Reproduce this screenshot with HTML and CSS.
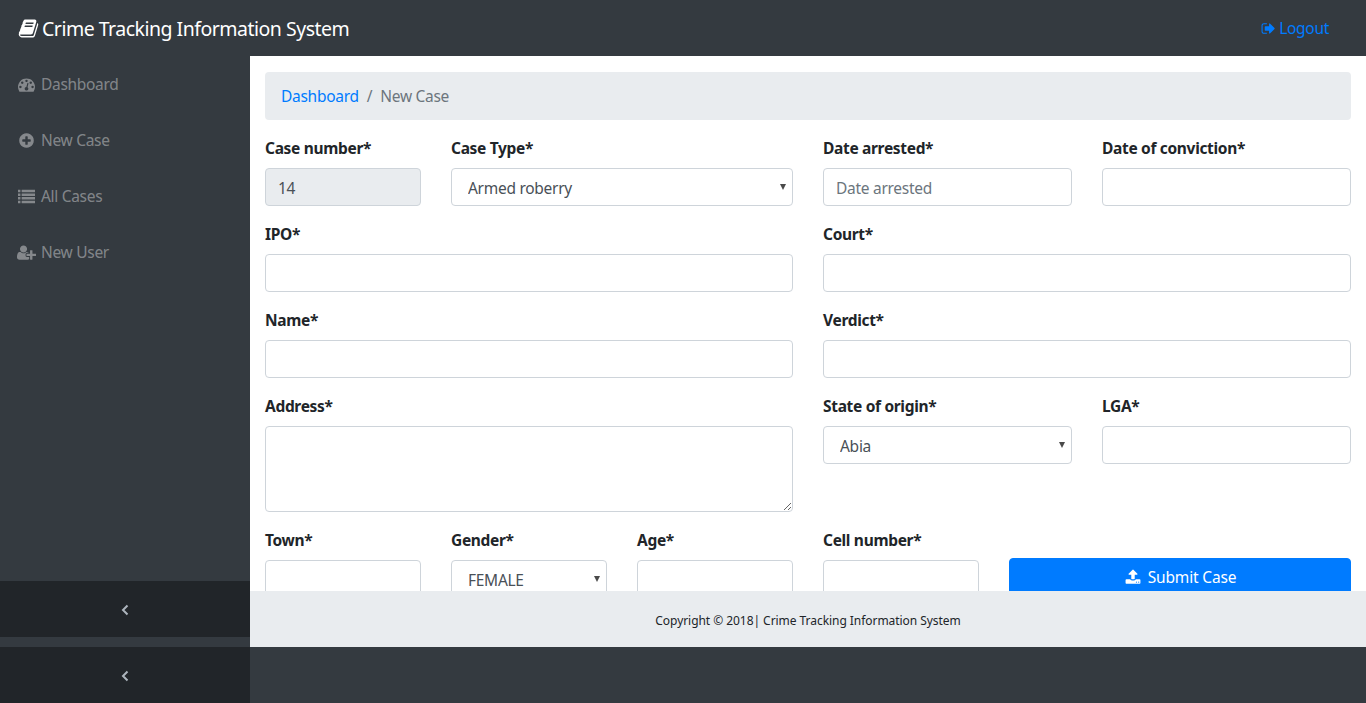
FILE: index.html
```html
<!DOCTYPE html>
<html>
<head>
<meta charset="utf-8">
<title>New Case</title>
<link rel="stylesheet" href="styles.css">
</head>
<body>
<nav class="topbar">
	<a class="brand" href="#">
		<svg class="ico" viewBox="0 0 1792 1792"><path d="M1703 478q40 57 18 129l-275 906q-19 64-76.5 107.5t-122.5 43.5h-923q-77 0-148.5-53.5t-99.5-131.5q-24-67-2-127 0-4 3-27t4-37q1-8-3-21.5t-3-19.5q2-11 8-21t16.5-23.5 16.5-23.5q23-38 45-91.5t30-91.5q3-10 .5-30t-.5-28q3-11 17-28t17-23q21-36 42-92t25-90q1-9-2.5-32t.5-28q4-13 22-30.5t22-22.5q19-26 42.5-84.5t27.5-96.5q1-8-3-25.5t-2-26.5q2-8 9-18t18-23 17-21q8-12 16.5-30.5t15-35 16-36 19.5-32 26.5-23.5 36-11.5 47.5 5.5l-1 3q38-9 51-9h761q74 0 114 56t18 130l-274 906q-36 119-71.5 153.5t-128.5 34.5h-869q-27 0-38 15-11 16-1 43 24 70 144 70h923q29 0 56-15.5t35-41.5l300-987q7-22 5-57 38 15 59 43zm-1064 2q-4 13 2 22.5t20 9.5h608q13 0 25.5-9.5t16.5-22.5l21-64q4-13-2-22.5t-20-9.5h-608q-13 0-25.5 9.5t-16.5 22.5zm-83 256q-4 13 2 22.5t20 9.5h608q13 0 25.5-9.5t16.5-22.5l21-64q4-13-2-22.5t-20-9.5h-608q-13 0-25.5 9.5t-16.5 22.5z"/></svg>
		<span class="brand-text">Crime Tracking Information System</span>
	</a>
	<a class="logout" href="#">
		<svg class="ico" viewBox="0 0 1792 1792"><path d="M704 1440q0 4 1 20t.5 26.5-3 23.5-10 19.5-20.5 6.5h-320q-119 0-203.5-84.5t-84.5-203.5v-704q0-119 84.5-203.5t203.5-84.5h320q13 0 22.5 9.5t9.5 22.5q0 4 1 20t.5 26.5-3 23.5-10 19.5-20.5 6.5h-320q-66 0-113 47t-47 113v704q0 66 47 113t113 47h312l11.5 1 11.5 3 8 5.5 7 9 2 13.5zm928-544q0 26-19 45l-544 544q-19 19-45 19t-45-19-19-45v-288h-448q-26 0-45-19t-19-45v-384q0-26 19-45t45-19h448v-288q0-26 19-45t45-19 45 19l544 544q19 19 19 45z"/></svg>
		Logout
	</a>
</nav>

<div class="wrapper">
	<div class="sidebar">
		<ul class="side-menu">
			<li><a href="#">
				<svg class="ico" viewBox="0 0 1792 1792"><path d="M384 1152q0-53-37.5-90.5t-90.5-37.5-90.5 37.5-37.5 90.5 37.5 90.5 90.5 37.5 90.5-37.5 37.5-90.5zm192-448q0-53-37.5-90.5t-90.5-37.5-90.5 37.5-37.5 90.5 37.5 90.5 90.5 37.5 90.5-37.5 37.5-90.5zm428 481l101-382q6-26-7.5-48.5t-38.5-29.5-48 6.5-30 39.5l-101 382q-60 5-107 43.5t-63 98.5q-20 77 20 146t117 89 146-20 89-117q16-60-6-117t-72-91zm660-33q0-53-37.5-90.5t-90.5-37.5-90.5 37.5-37.5 90.5 37.5 90.5 90.5 37.5 90.5-37.5 37.5-90.5zm-640-640q0-53-37.5-90.5t-90.5-37.5-90.5 37.5-37.5 90.5 37.5 90.5 90.5 37.5 90.5-37.5 37.5-90.5zm448 192q0-53-37.5-90.5t-90.5-37.5-90.5 37.5-37.5 90.5 37.5 90.5 90.5 37.5 90.5-37.5 37.5-90.5zm320 448q0 261-141 483-19 29-54 29h-1402q-35 0-54-29-141-221-141-483 0-182 71-348t191-286 286-191 348-71 348 71 286 191 191 286 71 348z"/></svg>
				Dashboard</a></li>
			<li><a href="#">
				<svg class="ico" viewBox="0 0 1792 1792"><path d="M1344 960v-128q0-26-19-45t-45-19h-256v-256q0-26-19-45t-45-19h-128q-26 0-45 19t-19 45v256h-256q-26 0-45 19t-19 45v128q0 26 19 45t45 19h256v256q0 26 19 45t45 19h128q26 0 45-19t19-45v-256h256q26 0 45-19t19-45zm320-64q0 209-103 385.5t-279.5 279.5-385.5 103-385.5-103-279.5-279.5-103-385.5 103-385.5 279.5-279.5 385.5-103 385.5 103 279.5 279.5 103 385.5z"/></svg>
				New Case</a></li>
			<li><a href="#">
				<svg class="ico" viewBox="0 0 1792 1792"><path d="M0 192h256v256H0zM384 192h1408v256H384zM0 576h256v256H0zM384 576h1408v256H384zM0 960h256v256H0zM384 960h1408v256H384zM0 1344h256v256H0zM384 1344h1408v256H384z"/></svg>
				All Cases</a></li>
			<li><a href="#">
				<svg class="ico ico-wide" viewBox="0 0 2048 1792"><path d="M704 896q-159 0-271.5-112.5t-112.5-271.5 112.5-271.5 271.5-112.5 271.5 112.5 112.5 271.5-112.5 271.5-271.5 112.5zm960 128h352q13 0 22.5 9.5t9.5 22.5v192q0 13-9.5 22.5t-22.5 9.5h-352v352q0 13-9.5 22.5t-22.5 9.5h-192q-13 0-22.5-9.5t-9.5-22.5v-352h-352q-13 0-22.5-9.5t-9.5-22.5v-192q0-13 9.5-22.5t22.5-9.5h352v-352q0-13 9.5-22.5t22.5-9.5h192q13 0 22.5 9.5t9.5 22.5v352zm-736 224q0 52 38 90t90 38h256v238q-68 50-171 50h-874q-121 0-194-69t-73-190q0-53 3.5-103.5t14-109 26.5-108.5 43-97.5 62-81 85.5-53.5 111.5-20q19 0 39 17 79 61 154.5 91.5t164.5 30.5 164.5-30.5 154.5-91.5q20-17 39-17 132 0 217 96h-223q-52 0-90 38t-38 90v192z"/></svg>
				New User</a></li>
		</ul>
		<a class="toggler" href="#"><svg class="angle" viewBox="0 0 8 12"><path d="M6.5 1.5 2 6l4.5 4.5"/></svg></a>
		<a class="toggler toggler-last" href="#"><svg class="angle" viewBox="0 0 8 12"><path d="M6.5 1.5 2 6l4.5 4.5"/></svg></a>
	</div>

	<div class="main">
		<div class="content">
			<ol class="breadcrumb">
				<li><a href="#">Dashboard</a></li>
				<li class="sep">/</li>
				<li class="current">New Case</li>
			</ol>
			<form class="case-form">
				<div class="group s2">
					<label>Case number*</label>
					<input class="control" type="text" value="14" readonly>
				</div>
				<div class="group s4">
					<label>Case Type*</label>
					<div class="select-box">
						<select class="control"><option>Armed roberry</option></select>
					</div>
				</div>
				<div class="group s3">
					<label>Date arrested*</label>
					<input class="control" type="text" placeholder="Date arrested">
				</div>
				<div class="group s3">
					<label>Date of conviction*</label>
					<input class="control" type="text">
				</div>

				<div class="group s6">
					<label>IPO*</label>
					<input class="control" type="text">
				</div>
				<div class="group s6">
					<label>Court*</label>
					<input class="control" type="text">
				</div>

				<div class="group s6">
					<label>Name*</label>
					<input class="control" type="text">
				</div>
				<div class="group s6">
					<label>Verdict*</label>
					<input class="control" type="text">
				</div>

				<div class="group s6">
					<label>Address*</label>
					<textarea class="control area"></textarea>
				</div>
				<div class="group s3">
					<label>State of origin*</label>
					<div class="select-box">
						<select class="control"><option>Abia</option></select>
					</div>
				</div>
				<div class="group s3">
					<label>LGA*</label>
					<input class="control" type="text">
				</div>

				<div class="group s2">
					<label>Town*</label>
					<input class="control" type="text">
				</div>
				<div class="group s2">
					<label>Gender*</label>
					<div class="select-box">
						<select class="control"><option>FEMALE</option></select>
					</div>
				</div>
				<div class="group s2">
					<label>Age*</label>
					<input class="control" type="text">
				</div>
				<div class="group s2">
					<label>Cell number*</label>
					<input class="control" type="text">
				</div>
				<div class="group s4">
					<button class="submit" type="button">
						<svg class="ico" viewBox="0 0 1792 1792"><path d="M1344 1472q0-26-19-45t-45-19-45 19-19 45 19 45 45 19 45-19 19-45zm256 0q0-26-19-45t-45-19-45 19-19 45 19 45 45 19 45-19 19-45zm128-224v320q0 40-28 68t-68 28h-1472q-40 0-68-28t-28-68v-320q0-40 28-68t68-28h427q21 56 70.5 92t110.5 36h256q61 0 110.5-36t70.5-92h427q40 0 68 28t28 68zm-325-648q-17 40-59 40h-256v448q0 26-19 45t-45 19h-256q-26 0-45-19t-19-45v-448h-256q-42 0-59-40-17-39 14-69l448-448q18-19 45-19t45 19l448 448q31 30 14 69z"/></svg>
						Submit Case
					</button>
				</div>
			</form>
		</div>
		<footer class="footer">Copyright © 2018| Crime Tracking Information System</footer>
	</div>
</div>
</body>
</html>
```

FILE: styles.css
```css
*{box-sizing:border-box;}
html,body{height:100%;}
body{margin:0; height:703px; overflow:hidden; background:#343a40; color:#212529; font-family:"Noto Sans","Open Sans","Liberation Sans",sans-serif; font-size:16px; line-height:24px;}
a{text-decoration:none;}
ul,ol{margin:0; padding:0; list-style:none;}
.ico{width:16px; height:16px; fill:currentColor; flex:none;}

.topbar{display:flex; align-items:center; justify-content:space-between; height:56px; padding:0 37px 0 18px;}
.brand{display:flex; align-items:center; gap:3px; color:#fff; font-size:19.5px; letter-spacing:-.5px;}
.brand .ico{width:21px; height:21px;}
.brand-text{padding-top:2px;}
.logout{display:flex; align-items:center; gap:3px; color:#007bff; font-size:15.5px; letter-spacing:-.3px;}
.logout .ico{width:15px; height:15px;}

.wrapper{display:flex; height:647px;}
.sidebar{display:flex; flex-direction:column; width:250px; flex:none;}
.side-menu{flex:1;}
.side-menu a{display:flex; align-items:center; gap:6px; height:56px; padding:0 18px; color:rgba(255,255,255,.4); font-size:15.5px; letter-spacing:-.3px;}
.side-menu .ico{width:17px; height:17px;}
.side-menu .ico-wide{width:19px; margin:0 -1px;}
.toggler{display:flex; align-items:center; justify-content:center; height:56px; padding-top:2px; background:#212529;}
.toggler-last{margin-top:10px;}
.angle{width:8px; height:12px; fill:none; stroke:#adb5bd; stroke-width:2;}

.main{display:flex; flex-direction:column; flex:1; height:591px;}
.content{height:535px; overflow:hidden; padding:16px 15px 0; background:#fff;}
.breadcrumb{display:flex; gap:8px; height:48px; align-items:center; margin-bottom:16px; padding:0 16px; background:#e9ecef; border-radius:4px; font-size:15.5px; letter-spacing:-.28px;}
.breadcrumb a{color:#007bff;}
.sep,.current{color:#6c757d;}

.case-form{display:grid; grid-template-columns:repeat(12,63px); column-gap:30px; row-gap:16px;}
.s2{grid-column:span 2;}
.s3{grid-column:span 3;}
.s4{grid-column:span 4;}
.s6{grid-column:span 6;}
.group label{display:block; margin-bottom:8px; font-weight:700; font-size:15.5px; letter-spacing:-.32px;}
.control{display:block; width:100%; height:38px; padding:2px 12px 0; border:1px solid #ced4da; border-radius:4px; background:#fff; color:#495057; font:15.5px/24px "Noto Sans","Open Sans","Liberation Sans",sans-serif; letter-spacing:-.28px; outline:none;}
.control[readonly]{background:#e9ecef;}
.control::placeholder{color:#6c757d; opacity:1;}
.area{height:86px; padding-top:6px; resize:vertical;}
.select-box{position:relative;}
.select-box select{appearance:none; -webkit-appearance:none; padding-left:16px;}
.select-box:after{content:''; position:absolute; top:16px; right:7px; border-left:3.5px solid transparent; border-right:3.5px solid transparent; border-top:6px solid #4a4a4a;}
.submit{display:flex; align-items:center; justify-content:center; gap:7px; width:100%; height:38px; margin-top:30px; padding:0 0 0 1px; border:1px solid #007bff; border-radius:4px; background:#007bff; color:#fff; font:15.5px/24px "Noto Sans","Open Sans","Liberation Sans",sans-serif; letter-spacing:-.18px;}

.footer{display:flex; align-items:center; justify-content:center; height:56px; padding-top:3px; background:#e9ecef; font-size:12px; letter-spacing:-.05px;}
```
